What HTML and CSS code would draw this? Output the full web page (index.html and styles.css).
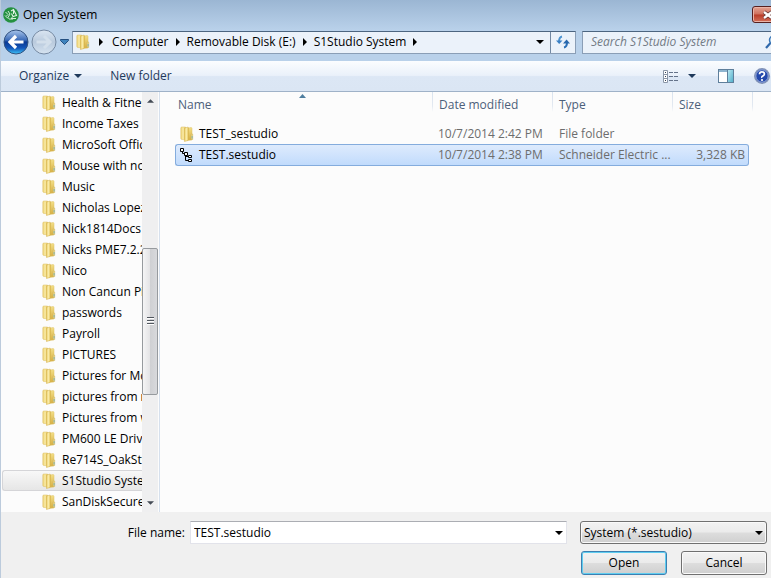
FILE: index.html
```html
<!DOCTYPE html>
<html lang="en">
<head>
<meta charset="utf-8">
<title>Open System</title>
<link rel="stylesheet" href="styles.css">
</head>
<body>
<svg class="defs" aria-hidden="true">
  <defs>
    <linearGradient id="fold-a" x1="0" x2="1"><stop offset="0" stop-color="#ecd272"/><stop offset=".5" stop-color="#f9eaa6"/><stop offset="1" stop-color="#e3c358"/></linearGradient>
    <linearGradient id="fold-b" x1="0" y1="0" x2="0" y2="1"><stop offset="0" stop-color="#f3df88"/><stop offset="1" stop-color="#d6ae42"/></linearGradient>
    <linearGradient id="orb" x1="0" y1="0" x2="0" y2="1"><stop offset="0" stop-color="#a9c6ec"/><stop offset=".42" stop-color="#3c6cb8"/><stop offset=".5" stop-color="#0b3a94"/><stop offset=".75" stop-color="#1457ba"/><stop offset="1" stop-color="#3fc5f8"/></linearGradient>
    <linearGradient id="orb-off" x1="0" y1="0" x2="0" y2="1"><stop offset="0" stop-color="#dbe6f2"/><stop offset=".5" stop-color="#b9cadd"/><stop offset="1" stop-color="#d6e3f0"/></linearGradient>
    <linearGradient id="pane" x1="0" y1="0" x2="1" y2="1"><stop offset="0" stop-color="#b9e8f2"/><stop offset="1" stop-color="#54b0cb"/></linearGradient>
    <symbol id="folder" viewBox="0 0 14 16">
      <path d="M6 2.500 L11 1.500 Q12 1.500 12 2.500 V14 L6 14.500Z" fill="url(#fold-b)" stroke="#dfc062" stroke-width=".5"/>
      <path d="M.8 2 Q.8 1 1.800 1 H5.500 V13.800 L2 13.500 Q.8 13.400 .8 12.500Z" fill="url(#fold-a)" stroke="#dcbf63" stroke-width=".5"/>
      <path d="M4.500 2.200 L7.500 1.200 Q8.500 1 8.500 2 V13.500 Q8.500 14.200 7.800 14.500 L4.500 15.500Z" fill="url(#fold-a)" stroke="#d3af48" stroke-width=".5"/>
      <path d="M11.200 8 h1.500 v5.500 h-1.500z" fill="#eedc92" stroke="#cdb25d" stroke-width=".5"/>
      <path d="M11.700 10 h.8 v2.500 h-.8z" fill="#6fa9b5"/>
    </symbol>
    <symbol id="down" viewBox="0 0 8 4"><path d="M0 0H8L4 4Z" fill="currentColor"/></symbol>
    <symbol id="right" viewBox="0 0 4 8"><path d="M0 0V8L4 4Z" fill="currentColor"/></symbol>
  </defs>
</svg>

<div class="window">
  <header class="titlebar">
    <svg class="app-icon" viewBox="0 0 16 16" aria-hidden="true">
      <circle cx="8" cy="8" r="7.800" fill="#249140"/>
      <path d="M8 4 10.500 2.500 13.500 8.500 10 9.500 8.500 6.500M10.500 2.500 10.500 7" fill="none" stroke="#e2f3e5" stroke-width="1.100"/>
      <path d="M2.500 5 5 7.500 3.500 9M5 4 7 7 5 10.500 7.500 13M2 8.500 5 11.500M8 11.500H13M9.500 10 8 11.500 9.500 13" fill="none" stroke="#d3ecd8" stroke-width="1"/>
    </svg>
    <h1 class="title">Open System</h1>
    <button class="close" type="button" aria-label="Close">
      <svg viewBox="0 0 12 10"><path d="M2 2 10 8M10 2 2 8" stroke="#60322f" stroke-width="4"/><path d="M2 2 10 8M10 2 2 8" stroke="#fff" stroke-width="2.400"/></svg>
    </button>
  </header>

  <nav class="navbar">
    <div class="history">
      <button class="orb" type="button" aria-label="Back">
        <svg viewBox="0 0 26 26"><circle cx="13" cy="13" r="12" fill="url(#orb)" stroke="#33527f"/><path d="M13 7 7 13 13 19M8 13H20.500" fill="none" stroke="#fff" stroke-width="3.200"/></svg>
      </button>
      <button class="orb" type="button" aria-label="Forward">
        <svg viewBox="0 0 26 26"><circle cx="13" cy="13" r="12" fill="url(#orb-off)" stroke="#768aa3"/><path d="M13 7 19 13 13 19M18 13H5.500" fill="none" stroke="#d3dfeb" stroke-width="3"/></svg>
      </button>
      <button class="recent" type="button" aria-label="Recent pages">
        <svg viewBox="0 0 9 6"><path d="M.5 .5H8.500V1.500L4.500 5.500.5 1.500Z" fill="#3e83bd" stroke="#244f80"/></svg>
      </button>
    </div>
    <div class="address">
      <svg class="folder" aria-hidden="true"><use href="#folder"/></svg>
      <svg class="sep" aria-hidden="true"><use href="#right"/></svg>
      <a href="#computer">Computer</a>
      <svg class="sep" aria-hidden="true"><use href="#right"/></svg>
      <a href="#disk">Removable Disk (E:)</a>
      <svg class="sep" aria-hidden="true"><use href="#right"/></svg>
      <a href="#system">S1Studio System</a>
      <svg class="sep" aria-hidden="true"><use href="#right"/></svg>
      <button class="address-drop" type="button" aria-label="Previous locations"><svg class="down"><use href="#down"/></svg></button>
      <button class="refresh" type="button" aria-label="Refresh">
        <svg viewBox="0 0 14 14"><path d="M6 1.500Q3 2 3 7" fill="none" stroke="#4c93d0" stroke-width="2"/><path d="M0 5.500H6.500L3.200 9Z" fill="#3a80c4"/><path d="M8 12.500Q11 12 11 7" fill="none" stroke="#2b70b8" stroke-width="2"/><path d="M7 8.500H14L10.600 4.500Z" fill="#2767ac"/></svg>
      </button>
    </div>
    <div class="search">
      <input type="search" aria-label="Search S1Studio System" placeholder="Search S1Studio System">
      <svg viewBox="0 0 14 14" aria-hidden="true"><circle cx="8.500" cy="5" r="4" fill="#dbeefb" stroke="#3c78b8" stroke-width="1.500"/><path d="M5.500 8 1 13" stroke="#2f68ab" stroke-width="2.200"/></svg>
    </div>
  </nav>

  <div class="toolbar">
    <button class="tool" type="button">Organize <svg class="down"><use href="#down"/></svg></button>
    <button class="tool" type="button">New folder</button>
    <div class="tool-end">
      <button class="tool" type="button" aria-label="Change view">
        <svg class="view-icon" viewBox="0 0 16 13"><path d="M.5 .5H4.500V12.500H.5ZM.5 4.500H4.500M.5 8.500H4.500" fill="#fff" stroke="#8b97a8"/><path d="M2 2.500H3M2 6.500H3M2 10.500H3" stroke="#333f52"/><path d="M6 2.500H10M11 2.500H15M6 6.500H10M11 6.500H15M6 10.500H10M11 10.500H15" stroke="#65738a"/></svg>
        <svg class="down"><use href="#down"/></svg>
      </button>
      <button class="tool" type="button" aria-label="Show the preview pane">
        <svg class="pane-icon" viewBox="0 0 16 14"><rect x=".5" y=".5" width="15" height="13" fill="#fff" stroke="#5f7f9b"/><path d="M1 2H10" stroke="#8fb5cf" stroke-width="2"/><path d="M9.500 1V13" stroke="#5f7f9b"/><rect x="10" y="1" width="5" height="12" fill="url(#pane)"/></svg>
      </button>
      <button class="tool" type="button" aria-label="Help">
        <svg class="help-icon" viewBox="0 0 16 16"><circle cx="8" cy="8" r="7.300" fill="#2348ab" stroke="#8394b6" stroke-width="1.300"/><circle cx="8" cy="8" r="6.200" fill="none" stroke="#c8d5ee" stroke-width=".7"/><path d="M5.500 6.200Q5.600 3.900 8 3.900T10.400 6Q10.400 7.200 8.900 8T8 9.800" fill="none" stroke="#fff" stroke-width="1.700"/><circle cx="8" cy="12" r="1.100" fill="#fff"/></svg>
      </button>
    </div>
  </div>

  <main class="content">
    <aside class="sidebar">
      <ul class="tree">
        <li><svg class="folder"><use href="#folder"/></svg><span>Health &amp; Fitnes</span></li>
        <li><svg class="folder"><use href="#folder"/></svg><span>Income Taxes</span></li>
        <li><svg class="folder"><use href="#folder"/></svg><span>MicroSoft Offic</span></li>
        <li><svg class="folder"><use href="#folder"/></svg><span>Mouse with no</span></li>
        <li><svg class="folder"><use href="#folder"/></svg><span>Music</span></li>
        <li><svg class="folder"><use href="#folder"/></svg><span>Nicholas Lopez</span></li>
        <li><svg class="folder"><use href="#folder"/></svg><span>Nick1814Docs</span></li>
        <li><svg class="folder"><use href="#folder"/></svg><span>Nicks PME7.2.2</span></li>
        <li><svg class="folder"><use href="#folder"/></svg><span>Nico</span></li>
        <li><svg class="folder"><use href="#folder"/></svg><span>Non Cancun Pi</span></li>
        <li><svg class="folder"><use href="#folder"/></svg><span>passwords</span></li>
        <li><svg class="folder"><use href="#folder"/></svg><span>Payroll</span></li>
        <li><svg class="folder"><use href="#folder"/></svg><span>PICTURES</span></li>
        <li><svg class="folder"><use href="#folder"/></svg><span>Pictures for Mc</span></li>
        <li><svg class="folder"><use href="#folder"/></svg><span>pictures from m</span></li>
        <li><svg class="folder"><use href="#folder"/></svg><span>Pictures from w</span></li>
        <li><svg class="folder"><use href="#folder"/></svg><span>PM600 LE Drive</span></li>
        <li><svg class="folder"><use href="#folder"/></svg><span>Re714S_OakStC</span></li>
        <li class="current"><svg class="folder"><use href="#folder"/></svg><span>S1Studio System</span></li>
        <li><svg class="folder"><use href="#folder"/></svg><span>SanDiskSecureA</span></li>
      </ul>
      <div class="scrollbar" aria-hidden="true">
        <svg class="scroll-arrow up"><use href="#down"/></svg>
        <div class="track"><div class="space-above"></div><div class="thumb"><i></i><i></i><i></i></div><div class="space-below"></div></div>
        <svg class="scroll-arrow"><use href="#down"/></svg>
      </div>
    </aside>

    <section class="files">
      <table>
        <colgroup><col class="c-name"><col class="c-date"><col class="c-type"><col class="c-size"></colgroup>
        <thead>
          <tr><th class="sorted">Name<svg viewBox="0 0 7 4" aria-hidden="true"><path d="M0 4 3.500 0 7 4Z" fill="#517f9f"/></svg></th><th>Date modified</th><th>Type</th><th>Size</th></tr>
        </thead>
        <tbody>
          <tr>
            <td><div class="file"><svg class="folder"><use href="#folder"/></svg>TEST_sestudio</div></td>
            <td>10/7/2014 2:42 PM</td><td>File folder</td><td class="size"></td>
          </tr>
          <tr class="selected">
            <td><div class="file"><svg class="tree-icon" viewBox="0 0 14 16"><path d="M2.500 4V6.500H4M5.500 8V13.500H8M5.500 9.500H8" fill="none" stroke="#000"/><path d="M.5 1.500H3.500V4.500H.5ZM4.500 5.500H7.500V8.500H4.500ZM8.500 8.500H11.500V10.500H8.500ZM8.500 12.500H11.500V14.500H8.500Z" fill="#fff" stroke="#000"/></svg>TEST.sestudio</div></td>
            <td>10/7/2014 2:38 PM</td><td>Schneider Electric ...</td><td class="size">3,328 KB</td>
          </tr>
        </tbody>
      </table>
    </section>
  </main>

  <form class="footer">
    <div class="fields">
      <label for="filename">File name:</label>
      <div class="combo"><input id="filename" type="text" value="TEST.sestudio"><svg class="down"><use href="#down"/></svg></div>
      <div class="filter"><select aria-label="File type"><option>System (*.sestudio)</option></select><svg class="down"><use href="#down"/></svg></div>
    </div>
    <div class="actions">
      <button class="push default" type="button">Open</button>
      <button class="push" type="button">Cancel</button>
    </div>
  </form>
</div>
</body>
</html>
```
FILE: styles.css
```css
* { box-sizing: border-box; }

body {
  margin: 0;
  overflow: hidden;
  font: 12px/16px "Open Sans", "Noto Sans", sans-serif;
  color: #000;
}

button, input, select { font: inherit; color: inherit; margin: 0; }
button { border: 0; padding: 0; background: none; }
a { color: inherit; text-decoration: none; }
svg { display: block; flex: none; }

.defs { position: absolute; width: 0; height: 0; }
.folder { width: 14px; height: 16px; }
.down { width: 8px; height: 4px; }

.window {
  display: flex;
  flex-direction: column;
  height: 100vh;
  border-left: 1px solid #bccbdc;
  background: linear-gradient(#9bb6d3, #b9d1ea 30px, #b9d1ea);
}

/* Title bar */
.titlebar {
  display: flex;
  align-items: center;
  height: 29px;
  flex: none;
  padding-left: 2px;
  gap: 4px;
}
.app-icon { width: 16px; height: 16px; }
.title { margin: 0; font-size: 12px; font-weight: 400; flex: 1; }
.close {
  width: 32px;
  height: 17px;
  margin-right: -13px;
  padding-left: 9px;
  border: 1px solid #57201f;
  border-radius: 3px;
  background: linear-gradient(#e3a393, #cf6f5c 48%, #b93c28 52%, #d3705a);
  box-shadow: inset 0 0 0 1px #e9b3a7;
}
.close svg { width: 12px; height: 10px; }

/* Navigation */
.navbar {
  display: flex;
  align-items: center;
  height: 26px;
  margin-bottom: 6px;
  flex: none;
  padding-left: 2px;
}
.history {
  display: flex;
  align-items: center;
  gap: 2px;
  width: 69px;
  flex: none;
}
.orb, .orb svg { width: 26px; height: 26px; }
.recent { margin-left: 1px; }
.recent svg { width: 9px; height: 6px; }
.address, .search {
  display: flex;
  align-items: center;
  height: 23px;
  border: 1px solid #8a9eb6;
  border-top-color: #4c6580;
  background: #ebf2fa;
}
.address { flex: 504; padding-left: 3px; }
.address a { white-space: nowrap; }
.address .sep { width: 4px; height: 8px; margin: 0 9px; color: #000; }
.address a + .sep { margin: 0 7px; }
.address-drop {
  display: flex;
  align-items: center;
  justify-content: flex-end;
  flex: 1;
  padding-right: 6px;
}
.refresh {
  display: grid;
  place-items: center;
  width: 25px;
  height: 21px;
  border-left: 1px solid #7389a3;
}
.refresh svg { width: 14px; height: 14px; }
.search { flex: 200; margin: 0 -11px 0 6px; }
.search input {
  flex: 1;
  min-width: 0;
  padding: 0 8px;
  border: 0;
  outline: 0;
  background: none;
}
.search input::placeholder { font-style: italic; color: #737b85; opacity: 1; }
.search svg { width: 14px; height: 14px; margin-right: 2px; }

/* Toolbar */
.toolbar {
  display: flex;
  align-items: center;
  gap: 28px;
  height: 31px;
  flex: none;
  padding-left: 18px;
  border-bottom: 1px solid #9fb2c8;
  background: linear-gradient(#fbfdff, #eaf1fa 48%, #dce7f5 52%, #dbe6f4);
  color: #1e395b;
}
.tool { display: flex; align-items: center; gap: 5px; }
.tool-end { display: flex; align-items: center; gap: 22px; margin-left: auto; }
.tool-end .tool { gap: 9px; }
.tool-end .tool:last-child { margin: 0 1px 0 -2px; }
.view-icon { width: 16px; height: 13px; }
.pane-icon { width: 16px; height: 14px; }
.help-icon { width: 16px; height: 16px; }

/* Main area */
.content { display: flex; flex: 1; min-height: 0; background: #fcfcfc; }
.sidebar {
  display: flex;
  width: 159px;
  flex: none;
  border-right: 1px solid #d6e0ed;
}
.tree { flex: 1; min-width: 0; margin: 0; padding: 0; list-style: none; overflow: hidden; }
.tree li {
  display: flex;
  align-items: center;
  gap: 6px;
  height: 21px;
  padding-left: 41px;
  white-space: nowrap;
}
.tree span { overflow: hidden; }
.tree .current {
  margin-left: 1px;
  padding-left: 39px;
  border: 1px solid #d5d5d8;
  border-right: 0;
  border-radius: 3px 0 0 3px;
  background: linear-gradient(#f8f8f8, #e6e6e6);
}
.scrollbar {
  display: flex;
  flex-direction: column;
  align-items: center;
  width: 16px;
  margin-right: 1px;
  padding: 7px 0;
  background: #efeff0;
}
.scroll-arrow { width: 7px; height: 4px; color: #444b55; }
.up { transform: scaleY(-1); }
.track { display: flex; flex-direction: column; align-self: stretch; flex: 1; }
.space-above { flex: 146; }
.space-below { flex: 107; }
.thumb {
  display: flex;
  flex: 145;
  flex-direction: column;
  align-items: center;
  justify-content: center;
  gap: 1px;
  border: 1px solid #969a9e;
  border-radius: 2px;
  background: linear-gradient(90deg, #f5f5f6, #e4e4e6 48%, #cfd0d3 52%, #d8d9dc);
}
.thumb i { width: 7px; height: 2px; border-top: 1px solid #50565e; background: #fff; }

/* File list */
.files { flex: 1; min-width: 0; padding-left: 15px; }
table { table-layout: fixed; width: 574px; border-spacing: 0; }
.c-name { width: 258px; }
.c-date, .c-type { width: 120px; }
.c-size { width: 76px; }
th {
  position: relative;
  height: 26px;
  padding: 0 0 0 6px;
  font-weight: 400;
  text-align: left;
  color: #4c607a;
}
th:first-child { padding-left: 3px; }
th::after {
  content: "";
  position: absolute;
  top: 0;
  right: 0;
  width: 1px;
  height: 20px;
  background: linear-gradient(#d9e3ef, #e3e9f1 70%, #fcfcfc);
}
th:last-child::after { right: -4px; }
.sorted svg { position: absolute; top: 2px; left: calc(50% - 5px); width: 7px; height: 4px; }
td {
  height: 22px;
  padding: 0 0 0 5px;
  border: solid transparent;
  border-width: 1px 0;
  white-space: nowrap;
  color: #6d6d6d;
}
td:nth-child(3) { padding-left: 6px; }
tbody tr:first-child td { height: 26px; padding-top: 5px; }
td:first-child { padding-left: 4px; border-left-width: 1px; color: #000; }
td:last-child { border-right-width: 1px; }
.file { display: flex; align-items: center; gap: 5px; }
.size { padding: 0 3px 0 0; text-align: right; }
.selected td { border-color: #84acdd; background: linear-gradient(#deebfd, #c1dbfc); }
.selected td:first-child { border-radius: 3px 0 0 3px; }
.selected td:last-child { border-radius: 0 3px 3px 0; }
.tree-icon { width: 14px; height: 16px; }

/* Footer */
.footer {
  flex: none;
  height: 66px;
  padding: 9px 4px 0 4px;
  background: #f0f0f0;
}
.fields { display: flex; align-items: center; }
.fields label { width: 180px; text-align: right; }
.combo, .filter { position: relative; height: 23px; }
.combo { flex: 1; margin: 0 13px 0 5px; }
.filter { width: 187px; }
.combo input, .filter select {
  width: 100%;
  height: 23px;
  padding: 0 3px;
  border: 1px solid #e2e3ea;
  border-top-color: #abadb3;
  outline: 0;
  background: #fff;
}
.filter select {
  appearance: none;
  border: 1px solid #707070;
  border-radius: 3px;
  background: linear-gradient(#f2f2f2, #ebebeb 48%, #dddddd 52%, #cfcfcf);
  box-shadow: inset 0 0 0 1px #fafafa;
}
.combo .down, .filter .down { position: absolute; top: 10px; right: 4px; color: #000; }
.actions { display: flex; justify-content: flex-end; gap: 14px; margin-top: 7px; }
.push {
  width: 86px;
  height: 24px;
  border: 1px solid #707070;
  border-radius: 3px;
  background: linear-gradient(#f2f2f2, #ebebeb 48%, #dddddd 52%, #cfcfcf);
  box-shadow: inset 0 0 0 1px #fafafa;
}
.default {
  border-color: #3c7fb1;
  box-shadow: inset 0 0 0 1px #5fcdf0;
}
```
